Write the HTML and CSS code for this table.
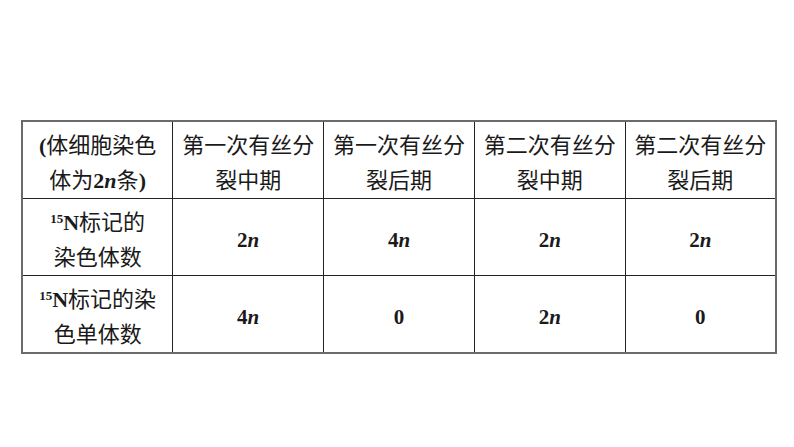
FILE: index.html
```html
<!DOCTYPE html>
<html lang="zh">
<head>
<meta charset="utf-8">
<link rel="stylesheet" href="styles.css">
</head>
<body>
<table class="grid">
  <tr>
    <td><span class="b">(</span>体细胞染色<br>体为<span class="b">2<i>n</i></span>条<span class="b">)</span></td>
    <td>第一次有丝分<br>裂中期</td>
    <td>第一次有丝分<br>裂后期</td>
    <td>第二次有丝分<br>裂中期</td>
    <td>第二次有丝分<br>裂后期</td>
  </tr>
  <tr>
    <td><sup class="b">15</sup><span class="b">N</span>标记的<br>染色体数</td>
    <td class="num">2<i>n</i></td>
    <td class="num">4<i>n</i></td>
    <td class="num">2<i>n</i></td>
    <td class="num">2<i>n</i></td>
  </tr>
  <tr>
    <td><sup class="b">15</sup><span class="b">N</span>标记的染<br>色单体数</td>
    <td class="num">4<i>n</i></td>
    <td class="num">0</td>
    <td class="num">2<i>n</i></td>
    <td class="num">0</td>
  </tr>
</table>
</body>
</html>
```
FILE: styles.css
```css
html, body {
  margin: 0;
  padding: 0;
  background: #ffffff;
}
body {
  padding: 120px 0 0 21px;
  font-family: "Liberation Serif", "Noto Sans CJK SC", serif;
  color: #1a1a1a;
}
.grid {
  border-collapse: collapse;
  table-layout: fixed;
  width: 756px;
  border: 2px solid #6a6a6a;
}
.grid td {
  border: 1px solid #222222;
  height: 77px;
  padding: 6px 0 0 0;
  box-sizing: border-box;
  text-align: center;
  vertical-align: middle;
  font-size: 22px;
  line-height: 35px;
  font-weight: 400;
  font-family: "Liberation Serif", "Noto Sans CJK SC", serif;
}
.grid tr:first-child td { border-top: 2px solid #6a6a6a; }
.grid tr:last-child td { border-bottom: 2px solid #6a6a6a; }
.grid td:first-child { border-left: 2px solid #6a6a6a; }
.grid td:last-child { border-right: 2px solid #6a6a6a; }
.grid .b {
  font-weight: 700;
  font-family: "Liberation Serif", serif;
}
.grid td.num {
  font-weight: 700;
  font-size: 21px;
  font-family: "Liberation Serif", serif;
}
.grid sup {
  font-size: 13px;
  line-height: 0;
  vertical-align: 7px;
}
.grid i {
  font-style: italic;
}
```
